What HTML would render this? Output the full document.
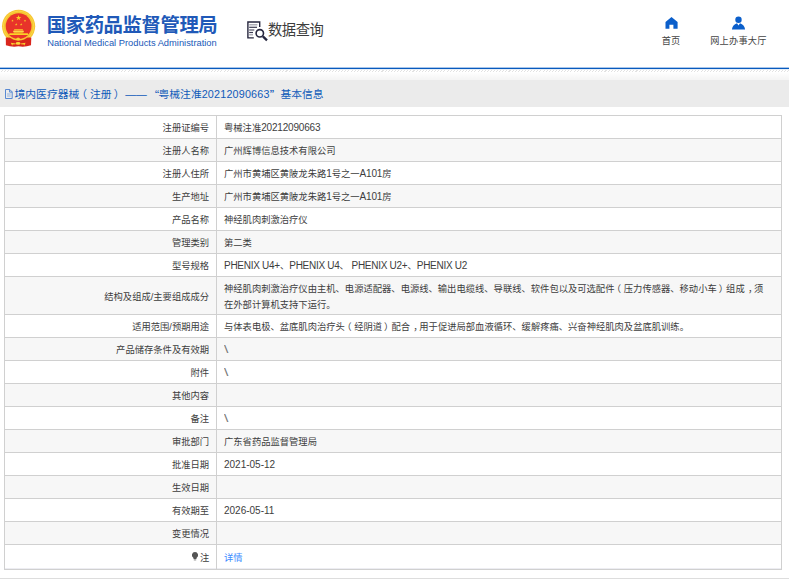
<!DOCTYPE html>
<html lang="zh-CN">
<head>
<meta charset="utf-8">
<title>国家药品监督管理局 数据查询</title>
<style>
html,body{margin:0;padding:0;background:#fff;}
body{width:789px;height:579px;overflow:hidden;position:relative;font-family:"Liberation Sans","Noto Sans CJK SC",sans-serif;color:#3d3d3d;}
.abs{position:absolute;white-space:nowrap;}
#logo{left:0;top:0;}
#cn{left:46.8px;top:12.6px;font-size:19.4px;line-height:24px;font-weight:bold;color:#2059b8;letter-spacing:-0.45px;}
#en{left:47.2px;top:36.6px;font-size:9.33px;line-height:12px;color:#2059b8;}
#qicon{left:240px;top:0;overflow:visible;}
#qtxt{left:268px;top:19.5px;transform:scaleY(1.07);font-size:14.3px;line-height:20px;color:#3c3c3c;letter-spacing:-0.45px;}
.nav{font-size:9.2px;line-height:12px;color:#444;text-align:center;}
#blue{left:0;top:67px;width:789px;height:3px;background:linear-gradient(#a9c6ea 0,#a9c6ea 1px,#085abe 1px,#085abe 2px,#e6eef8 2px,#e6eef8 3px);}
#hatch{left:0;top:70px;width:789px;height:2px;background:repeating-linear-gradient(135deg,#fff 0,#fff 1.45px,#e2e2e2 1.45px,#e2e2e2 2.19px);}
#grad{left:0;top:72px;width:789px;height:8px;background:linear-gradient(#fff,#f4f4f4);}
#bar{left:0;top:80px;width:789px;height:26.5px;background:#ebebeb;}
.bt{top:86px;font-size:10.78px;line-height:16px;color:#0f5ab9;}
.q{font-family:"Noto Sans CJK SC",sans-serif;}
#tbl{position:absolute;left:4px;top:115px;width:778px;border-collapse:collapse;table-layout:fixed;font-size:9.31px;}
#tbl td{border:1px solid #d0d0d0;height:22px;padding:0;line-height:16px;vertical-align:middle;white-space:nowrap;}
#tbl td.l{width:204.1px;text-align:right;padding-right:6.9px;}
#tbl td.v{padding-left:7px;padding-right:10px;}
#tbl tr:nth-child(even) td{background:#f7f7f7;}
.t{transform:translateY(0.5px);}
.pl,.pr,.cm{position:relative;}
.pl{left:-2.7px;}
.pr{left:1.9px;}
.cm{left:3.2px;}
.n{font-size:10px;}
.bs{font-size:11.2px;color:#777;position:relative;left:-0.1px;top:-0.3px;display:inline-block;transform:scaleX(1.4);transform-origin:0 50%;}
.d{letter-spacing:-0.18px;}
.c{letter-spacing:-0.27px;}
.dt{letter-spacing:0;}
#tbl a{color:#3d8bff;text-decoration:none;}
#tbl tr.last td{box-shadow:inset 0 -1px #ededf2;}
#foot{left:0;top:578px;width:789px;height:1px;background:#ddd;}
</style>
</head>
<body>
<svg id="logo" class="abs" width="50" height="55" viewBox="0 0 50 55">
<circle cx="18.6" cy="26.3" r="16.6" fill="#f7c531"/>
<circle cx="18.6" cy="26.3" r="15.2" fill="none" stroke="#f9d94a" stroke-width="1"/>
<path d="M5.8 37.6 L31.3 37.6 L31 45.2 Q25 47.4 18.4 46.3 Q12 47.4 5.9 45.2 Z" fill="#d9261d"/>
<circle cx="18.6" cy="26.1" r="14.4" fill="#f7c531"/>
<circle cx="18.6" cy="26.1" r="12.9" fill="#e8332a"/>
<polygon points="18.60,15.10 19.25,17.10 21.36,17.10 19.65,18.34 20.30,20.35 18.60,19.11 16.90,20.35 17.55,18.34 15.84,17.10 17.95,17.10" fill="#fbd026"/>
<polygon points="12.50,19.40 12.79,20.30 13.74,20.30 12.97,20.85 13.26,21.75 12.50,21.20 11.74,21.75 12.03,20.85 11.26,20.30 12.21,20.30" fill="#fbd026"/>
<polygon points="25.00,19.40 25.29,20.30 26.24,20.30 25.47,20.85 25.76,21.75 25.00,21.20 24.24,21.75 24.53,20.85 23.76,20.30 24.71,20.30" fill="#fbd026"/>
<polygon points="16.20,23.10 16.49,24.00 17.44,24.00 16.67,24.55 16.96,25.45 16.20,24.90 15.44,25.45 15.73,24.55 14.96,24.00 15.91,24.00" fill="#fbd026"/>
<polygon points="21.20,23.10 21.49,24.00 22.44,24.00 21.67,24.55 21.96,25.45 21.20,24.90 20.44,25.45 20.73,24.55 19.96,24.00 20.91,24.00" fill="#fbd026"/>
<path d="M14.4 29.3 H22.6 L23.4 30.4 H13.6 Z" fill="#fbd026"/>
<path d="M13.4 30.7 H23.6 L24 32.2 H13 Z" fill="#f9d94a"/>
<rect x="14" y="32.2" width="8.8" height="1.1" fill="#f4b62a"/>
<path d="M9.6 33.3 H27.8 L28.4 35.1 H9 Z" fill="#fbd026"/>
<path d="M15.6 39.4 Q18.1 35.6 20.7 39.4 Q18.1 41.6 15.6 39.4 Z" fill="#f9d02e"/>
<ellipse cx="18.1" cy="43.4" rx="2.4" ry="1.4" fill="#fbd93a"/>
<path d="M10.8 42.8 L15.6 43.6 L15.6 44.3 L12.6 44.4 L12.2 45.8 Z" fill="#f9d02e"/>
<path d="M25.6 42.8 L20.8 43.6 L20.8 44.3 L23.8 44.4 L24.2 45.8 Z" fill="#f9d02e"/>
</svg>
<div id="cn" class="abs">国家药品监督管理局</div>
<div id="en" class="abs">National Medical Products Administration</div>
<svg id="qicon" class="abs" width="40" height="40" viewBox="0 0 40 40">
<g fill="none" stroke="#26263e" stroke-width="1.4">
<path d="M13.8 37.9 H7.9 V22 H19.7 V26.9"/>
<circle cx="19.8" cy="33.3" r="3.7" stroke-width="1.6"/>
<path d="M22.9 36.4 L27 40.4" stroke-width="2.3"/>
</g>
<g stroke-width="1.2" fill="none">
<path d="M9.2 24.8 H17.4" stroke="#9a9aa6"/>
<path d="M9.2 27.3 H17" stroke="#3a3a50"/>
<path d="M9.2 30 H14.3" stroke="#55556a"/>
<path d="M9.2 32.5 H13" stroke="#3a3a50"/>
<path d="M9.2 34.8 H13" stroke="#9a9aa6"/>
</g>
</svg>
<svg class="abs" style="left:660px;top:12px" width="24" height="22" viewBox="660 12 24 22">
<path d="M665.5 21.9 L671.5 16.9 L677.6 21.9 V28.7 H673.4 V24.8 H669.4 V28.7 H665.5 Z" fill="#0b5fcb"/>
</svg>
<svg class="abs" style="left:726px;top:12px" width="26" height="22" viewBox="726 12 26 22">
<circle cx="738.5" cy="19.7" r="3.2" fill="#0b5fcb"/>
<path d="M731.9 29.5 Q732.6 24.6 737 23.2 L738.5 25.6 L740 23.2 Q744.4 24.6 745.1 29.5 Z" fill="#0b5fcb"/>
</svg>
<div id="qtxt" class="abs">数据查询</div>
<div class="abs nav" style="left:651px;top:35px;width:40px;">首页</div>
<div class="abs nav" style="left:698.4px;top:35px;width:80px;letter-spacing:0.2px">网上办事大厅</div>
<div id="blue" class="abs"></div>
<div id="hatch" class="abs"></div>
<div id="grad" class="abs"></div>
<div id="bar" class="abs"></div>
<svg class="abs" style="left:4.4px;top:87.7px" width="10" height="12" viewBox="0 0 10 12"><path d="M1.5 1.5 H5.8 L8.2 3.9 V10.5 H1.5 Z M5.6 1.6 V4.1 H8.1" fill="none" stroke="#4a7fd0" stroke-width="0.9"/><path d="M3 6 H6.7 M3 8 H6.7" stroke="#7fa5dd" stroke-width="0.8"/></svg>
<div class="abs bt" style="left:14.6px">境内医疗器械<span style="position:relative;left:-3px">（</span>注册<span style="position:relative;left:2.3px">）</span></div>
<div class="abs bt" style="left:125.3px">——</div>
<div class="abs bt q" style="left:148.6px">“</div>
<div class="abs bt" style="left:158.6px">粤械注准</div>
<div class="abs bt" style="left:201.7px;letter-spacing:0.19px">20212090663</div>
<div class="abs bt q" style="left:269.8px">”</div>
<div class="abs bt" style="left:280.5px">基本信息</div>
<table id="tbl">
<tr><td class="l"><div class="t">注册证编号</div></td><td class="v"><div class="t">粤械注准<span class="n d">20212090663</span></div></td></tr>
<tr><td class="l"><div class="t">注册人名称</div></td><td class="v"><div class="t">广州辉博信息技术有限公司</div></td></tr>
<tr><td class="l"><div class="t">注册人住所</div></td><td class="v"><div class="t">广州市黄埔区黄陂龙朱路<span class="n d">1</span>号之一<span class="n d">A101</span>房</div></td></tr>
<tr><td class="l"><div class="t">生产地址</div></td><td class="v"><div class="t">广州市黄埔区黄陂龙朱路<span class="n d">1</span>号之一<span class="n d">A101</span>房</div></td></tr>
<tr><td class="l"><div class="t">产品名称</div></td><td class="v"><div class="t">神经肌肉刺激治疗仪</div></td></tr>
<tr><td class="l"><div class="t">管理类别</div></td><td class="v"><div class="t">第二类</div></td></tr>
<tr><td class="l"><div class="t">型号规格</div></td><td class="v"><div class="t"><span class="n c">PHENIX U4+</span>、<span class="n c">PHENIX U4</span>、 <span class="n c">PHENIX U2+</span>、<span class="n c">PHENIX U2</span></div></td></tr>
<tr><td class="l" style="height:37px"><div class="t">结构及组成/主要组成成分</div></td><td class="v"><div class="t">神经肌肉刺激治疗仪由主机、电源适配器、电源线、输出电缆线、导联线、软件包以及可选配件<span class="pl">（</span>压力传感器、移动小车<span class="pr">）</span>组成<span class="cm">，</span>须<br>在外部计算机支持下运行。</div></td></tr>
<tr><td class="l"><div class="t">适用范围/预期用途</div></td><td class="v"><div class="t">与体表电极、盆底肌肉治疗头<span class="pl">（</span>经阴道<span class="pr">）</span>配合<span class="cm">，</span>用于促进局部血液循环、缓解疼痛、兴奋神经肌肉及盆底肌训练。</div></td></tr>
<tr><td class="l"><div class="t">产品储存条件及有效期</div></td><td class="v"><div class="t"><span class="bs">\</span></div></td></tr>
<tr><td class="l"><div class="t">附件</div></td><td class="v"><div class="t"><span class="bs">\</span></div></td></tr>
<tr><td class="l"><div class="t">其他内容</div></td><td class="v"></td></tr>
<tr><td class="l"><div class="t">备注</div></td><td class="v"><div class="t"><span class="bs">\</span></div></td></tr>
<tr><td class="l"><div class="t">审批部门</div></td><td class="v"><div class="t">广东省药品监督管理局</div></td></tr>
<tr><td class="l"><div class="t">批准日期</div></td><td class="v"><div class="t"><span class="n dt">2021-05-12</span></div></td></tr>
<tr><td class="l"><div class="t">生效日期</div></td><td class="v"></td></tr>
<tr><td class="l"><div class="t">有效期至</div></td><td class="v"><div class="t"><span class="n dt">2026-05-11</span></div></td></tr>
<tr><td class="l"><div class="t">变更情况</div></td><td class="v"></td></tr>
<tr class="last"><td class="l" style="height:23px;padding-right:6.6px;padding-bottom:1px"><div class="t"><svg width="8" height="10" viewBox="0 0 8 10" style="vertical-align:-1.2px;margin-right:1.2px"><path d="M4 0.6 A3.1 3.1 0 0 1 5.7 6.3 L5.4 7.6 H2.6 L2.3 6.3 A3.1 3.1 0 0 1 4 0.6 Z" fill="#555"/><path d="M2.8 8.4 H5.2" stroke="#777" stroke-width="0.9"/></svg>注</div></td><td class="v" style="padding-bottom:1px"><div class="t"><a>详情</a></div></td></tr>
</table>
<div id="foot" class="abs"></div>
</body>
</html>
